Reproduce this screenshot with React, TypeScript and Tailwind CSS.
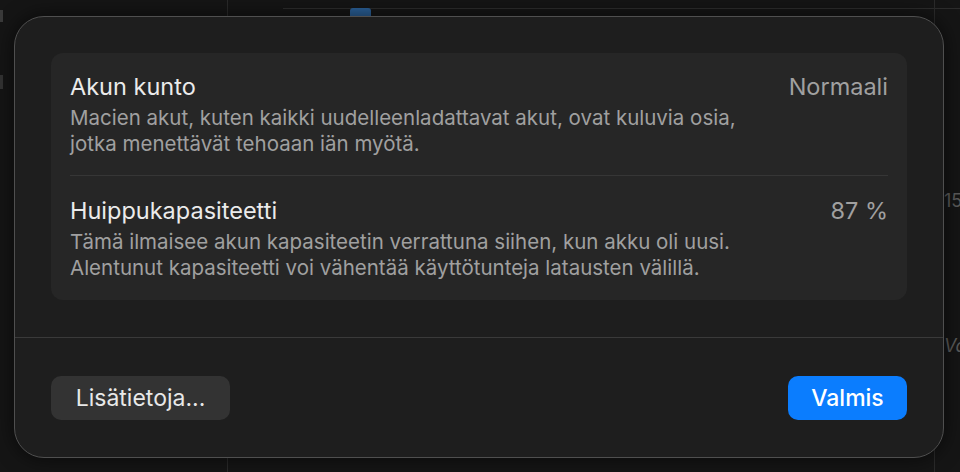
import React from "react";

function Row({ title, value, lines }: { title: string; value: string; lines: string[] }) {
  return (
    <div className="flex items-start justify-between">
      <div className="flex flex-col gap-[4px]">
        <div className="text-[23.5px] leading-[28px] text-[#ebebeb]">{title}</div>
        <div className="text-[20.5px] leading-[26px] text-[#a0a0a0]">
          {lines.map((l) => (
            <div key={l}>{l}</div>
          ))}
        </div>
      </div>
      <div className="text-[23.5px] leading-[28px] text-[#a0a0a0]">{value}</div>
    </div>
  );
}

export default function App() {
  return (
    <div
      className="relative w-[960px] h-[472px] overflow-hidden bg-[#151515]"
      style={{ fontFamily: "Inter, 'Noto Sans', sans-serif" }}
    >
      {/* background app hints */}
      <div className="absolute left-[227px] top-0 h-[16px] w-px bg-[#2a2a2a]" />
      <div className="absolute left-[227px] top-[457px] h-[15px] w-px bg-[#2a2a2a]" />
      <div className="absolute left-[283px] top-[8px] right-0 h-px bg-[#2c2c2c]" />
      <div className="absolute left-[350px] top-[8px] h-[8px] w-[21px] rounded-t-[3px] bg-[#2a5f96]" />
      <div className="absolute right-[25px] top-0 h-full w-px bg-[#2a2a2a]" />
      <div className="absolute right-0 top-[183px] w-[16px] h-[40px] overflow-hidden text-[18px] leading-[36px] text-[#5a5a5a]">
        15
      </div>
      <div className="absolute right-0 top-[328px] w-[16px] h-[40px] overflow-hidden text-[18px] italic leading-[36px] text-[#5a5a5a]">
        Va
      </div>
      <div className="absolute left-0 top-[10px] h-[12px] w-[3px] bg-[#3a3a3a]" />
      <div className="absolute left-0 top-[75px] h-[14px] w-[3px] bg-[#333]" />

      <div className="pt-[16px] pl-[14px]">
        <div className="relative flex h-[442px] w-[930px] flex-col rounded-[30px] border border-[#4f4f4f] bg-[#1e1e1e] shadow-[0_0_20px_rgba(0,0,0,0.6)]">
          <div className="px-[36px] pt-[36px]">
            <div className="flex h-[247px] flex-col rounded-[12px] bg-[#262626] px-[19px] pt-[20px]">
              <Row
                title="Akun kunto"
                value="Normaali"
                lines={[
                  "Macien akut, kuten kaikki uudelleenladattavat akut, ovat kuluvia osia,",
                  "jotka menettävät tehoaan iän myötä.",
                ]}
              />
              <div className="mt-[18px] h-px bg-[#363636]" />
              <div className="pt-[21px]">
                <Row
                  title="Huippukapasiteetti"
                  value="87 %"
                  lines={[
                    "Tämä ilmaisee akun kapasiteetin verrattuna siihen, kun akku oli uusi.",
                    "Alentunut kapasiteetti voi vähentää käyttötunteja latausten välillä.",
                  ]}
                />
              </div>
            </div>
          </div>
          <div className="mt-[37px] h-px bg-[#3a3a3a]" />
          <div className="flex items-center justify-between px-[36px] pt-[38px]">
            <button className="flex h-[44px] w-[179px] items-center justify-center rounded-[10px] bg-[#333333] text-[23px] text-[#e8e8e8]">
              Lisätietoja...
            </button>
            <button className="flex h-[44px] w-[119px] items-center justify-center rounded-[10px] bg-[#0b7dfe] text-[23px] font-medium text-white">
              Valmis
            </button>
          </div>
        </div>
      </div>
    </div>
  );
}
